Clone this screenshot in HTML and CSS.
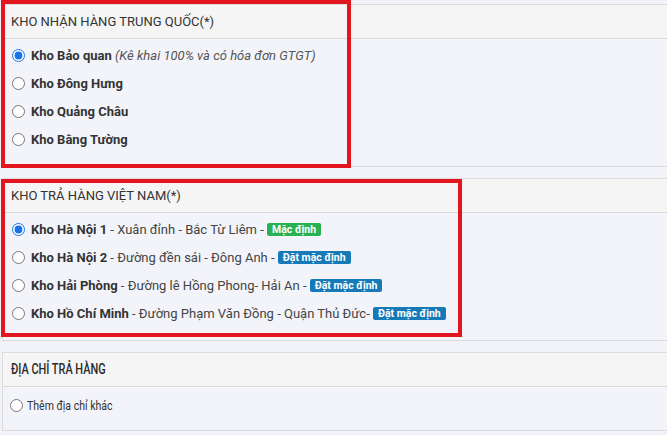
FILE: index.html
```html
<!DOCTYPE html>
<html lang="vi">
<head>
<meta charset="utf-8">
<link rel="stylesheet" href="styles.css">
</head>
<body>
<div class="page">
  <section class="panel">
    <div class="panel-head">KHO NHẬN HÀNG TRUNG QUỐC(*)</div>
    <div class="panel-body">
      <label class="opt"><input type="radio" name="cn" checked><b>Kho Bảo quan</b> <i class="note">(Kê khai 100% và có hóa đơn GTGT)</i></label>
      <label class="opt"><input type="radio" name="cn"><b>Kho Đông Hưng</b></label>
      <label class="opt"><input type="radio" name="cn"><b>Kho Quảng Châu</b></label>
      <label class="opt"><input type="radio" name="cn"><b>Kho Bằng Tường</b></label>
    </div>
    <div class="mark mark-cn"></div>
  </section>

  <section class="panel">
    <div class="panel-head">KHO TRẢ HÀNG VIỆT NAM(*)</div>
    <div class="panel-body">
      <label class="opt"><input type="radio" name="vn" checked><b>Kho Hà Nội 1</b> - Xuân đỉnh - Bắc Từ Liêm - <span class="badge green">Mặc định</span></label>
      <label class="opt"><input type="radio" name="vn"><b>Kho Hà Nội 2</b> - Đường đền sái - Đông Anh - <span class="badge blue">Đặt mặc định</span></label>
      <label class="opt"><input type="radio" name="vn"><b>Kho Hải Phòng</b> - Đường lê Hồng Phong- Hải An - <span class="badge blue">Đặt mặc định</span></label>
      <label class="opt"><input type="radio" name="vn"><b>Kho Hồ Chí Minh</b> - Đường Phạm Văn Đồng - Quận Thủ Đức- <span class="badge blue">Đặt mặc định</span></label>
    </div>
    <div class="mark mark-vn"></div>
  </section>

  <section class="panel panel-addr">
    <div class="panel-head"><span class="narrow">ĐỊA CHỈ TRẢ HÀNG</span></div>
    <div class="panel-body">
      <label class="opt"><input type="radio" name="addr"><span class="narrow">Thêm địa chỉ khác</span></label>
    </div>
  </section>
</div>
</body>
</html>
```

FILE: styles.css
```css
html, body {
  margin: 0;
  padding: 0;
}
body {
  background: #f1f3f8;
  font-family: Roboto, "Noto Sans", "Liberation Sans", sans-serif;
  font-size: 13px;
  color: #333;
  width: 667px;
  height: 435px;
  overflow: hidden;
}
.page {
  padding: 4px 0 0 2px;
  display: flex;
  flex-direction: column;
  gap: 11px;
  width: 680px;
}
.panel {
  position: relative;
  border: 1px solid #dcdcdc;
  border-right: none;
  background: #f2f4fa;
}
.panel-head {
  height: 33px;
  line-height: 33px;
  padding: 0 8px;
  background: #f5f5f5;
  border-bottom: 1px solid #dadada;
  color: #333;
}
.panel-body {
  padding: 3px 0 12px;
}
.opt {
  display: block;
  height: 28px;
  line-height: 28px;
  white-space: nowrap;
  color: #444;
}
.opt input {
  margin: 0 6px 0 9px;
  width: 13px;
  height: 13px;
  vertical-align: -2px;
  accent-color: #1a73e8;
}
.opt b {
  color: #333;
  font-weight: 700;
}
.note {
  color: #555;
}
.badge {
  display: inline-block;
  vertical-align: 1px;
  color: #fff;
  font-size: 10.5px;
  font-weight: 700;
  line-height: 13px;
  padding: 0 5px;
  border-radius: 2px;
}
.green { background: #27b151; }
.blue { background: #167ab8; }

.narrow {
  display: inline-block;
  transform: scaleX(0.78);
  transform-origin: left center;
}
.panel-addr .panel-head {
  font-size: 14px;
  font-weight: 500;
  color: #2a2a2a;
}
.panel-addr .panel-body {
  padding: 4px 0 11px;
}
.panel-addr .opt {
  font-size: 13.5px;
  color: #333;
}
.panel-addr .opt input {
  margin: 0 4px 0 7px;
}

.mark {
  position: absolute;
  border: 4px solid #e3151f;
  box-sizing: border-box;
  pointer-events: none;
}
.mark-cn {
  left: -2px;
  top: -5px;
  width: 350px;
  height: 168px;
}
.mark-vn {
  left: -2px;
  top: 0;
  width: 461px;
  height: 158px;
}
```
